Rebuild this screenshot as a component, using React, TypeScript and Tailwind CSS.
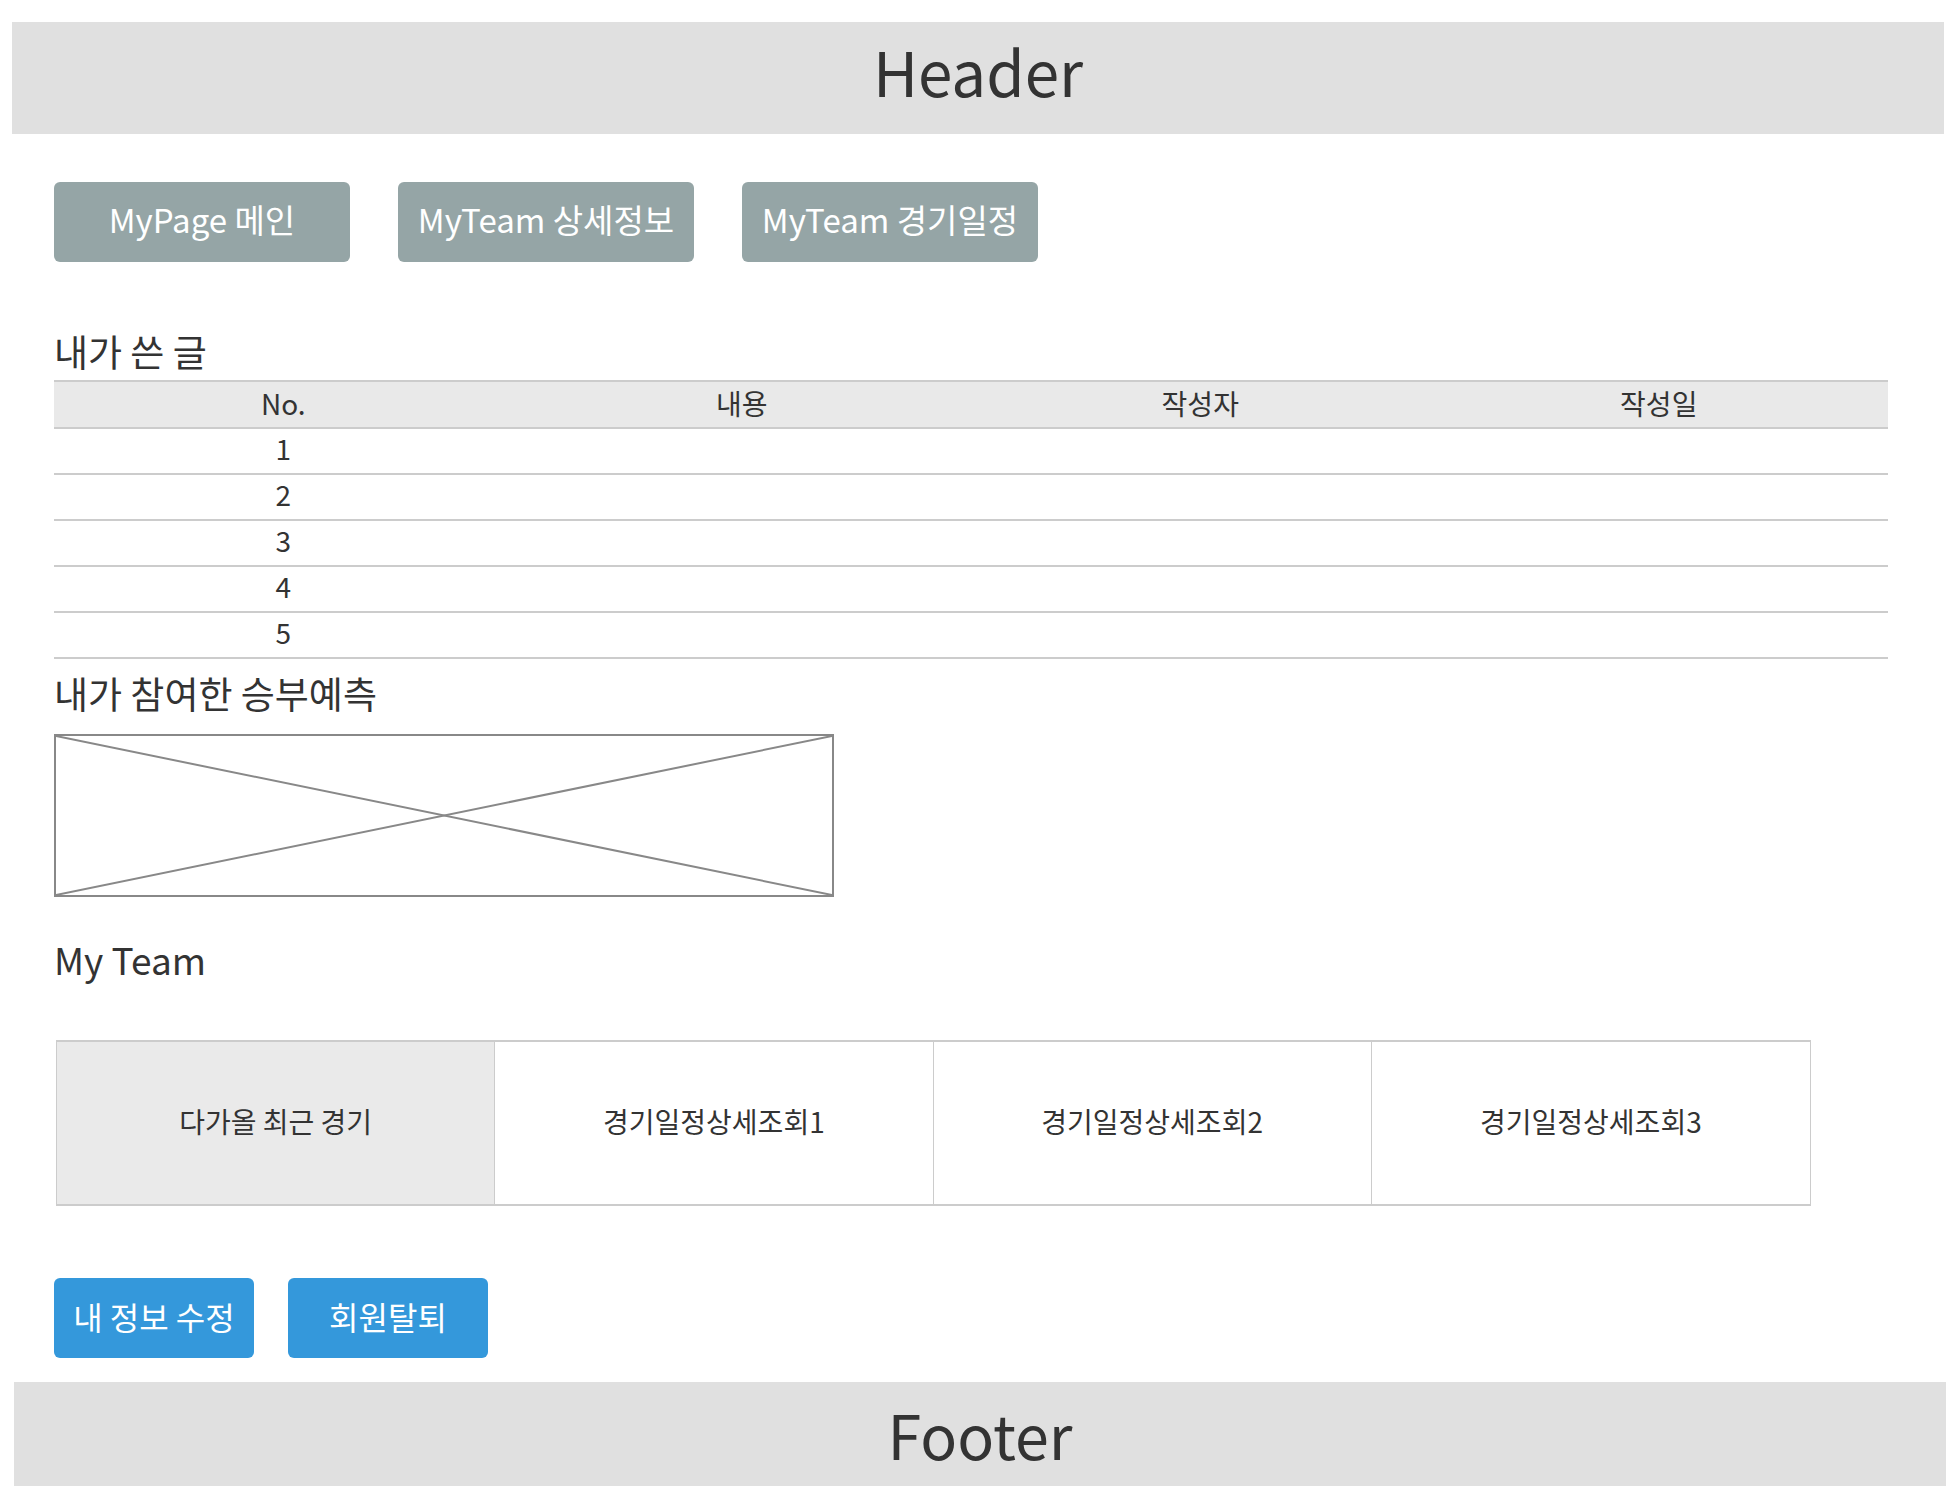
import React from "react";

const font = "font-['Noto_Sans_CJK_KR','Noto_Sans',sans-serif]";

function NavButton({ label }: { label: string }) {
  return (
    <button className="flex items-center justify-center w-[296px] h-[80px] pb-[5px] rounded-[6px] bg-[#95a5a6] text-white text-[33px] leading-[33px]">
      {label}
    </button>
  );
}

function BlueButton({ label }: { label: string }) {
  return (
    <button className="flex items-center justify-center w-[200px] h-[80px] pb-[5px] rounded-[6px] bg-[#3498db] text-white text-[32px] leading-[32px]">
      {label}
    </button>
  );
}

export default function App() {
  const rows = [1, 2, 3, 4, 5];
  const cols = ["No.", "내용", "작성자", "작성일"];
  const team = ["다가올 최근 경기", "경기일정상세조회1", "경기일정상세조회2", "경기일정상세조회3"];
  return (
    <div className={`${font} text-[#333] bg-white pt-[22px] px-[12px] min-h-[1486px]`}>
      <header className="h-[112px] pt-[17px] bg-[#e0e0e0] text-center text-[62px] leading-[62px] text-[#333]">
        Header
      </header>

      <main className="pl-[42px] pr-[56px]">
        <nav className="mt-[48px] flex gap-[48px]">
          <NavButton label="MyPage 메인" />
          <NavButton label="MyTeam 상세정보" />
          <NavButton label="MyTeam 경기일정" />
        </nav>

        <h2 className="mt-[67px] text-[37px] leading-[44px] font-normal">내가 쓴 글</h2>
        <div className="mt-[7px]">
          <div className="grid grid-cols-4 h-[49px] pb-[4px] border-t-2 border-b-2 border-[#ccc] bg-[#e9e9e9] text-[28px] leading-[28px] items-center">
            {cols.map((c) => (
              <div key={c} className="text-center">{c}</div>
            ))}
          </div>
          {rows.map((r) => (
            <div key={r} className="grid grid-cols-4 h-[46px] pb-[6px] border-b-2 border-[#ccc] text-[28px] leading-[28px] items-center">
              <div className="text-center">{r}</div>
              <div />
              <div />
              <div />
            </div>
          ))}
        </div>

        <h2 className="mt-[12px] text-[37px] leading-[44px] font-normal">내가 참여한 승부예측</h2>
        <div className="mt-[19px] w-[780px] h-[163px] border-2 border-[#888]">
          <svg className="w-full h-full block" viewBox="0 0 100 100" preserveAspectRatio="none">
            <line x1="0" y1="0" x2="100" y2="100" stroke="#888" strokeWidth="2" vectorEffect="non-scaling-stroke" />
            <line x1="100" y1="0" x2="0" y2="100" stroke="#888" strokeWidth="2" vectorEffect="non-scaling-stroke" />
          </svg>
        </div>

        <h2 className="mt-[40px] text-[37px] leading-[44px] font-normal">My Team</h2>

        <div className="mt-[59px] ml-[2px] w-[1755px] h-[166px] grid grid-cols-4 border-t-2 border-b-2 border-l border-r border-[#ccc]">
          {team.map((t, i) => (
            <div
              key={t}
              className={`flex items-center justify-center pb-[4px] text-[28px] leading-[28px] ${i === 0 ? "bg-[#eaeaea]" : "bg-white"} ${i < 3 ? "border-r border-[#ccc]" : ""}`}
            >
              {t}
            </div>
          ))}
        </div>

        <div className="mt-[72px] flex gap-[34px]">
          <BlueButton label="내 정보 수정" />
          <BlueButton label="회원탈퇴" />
        </div>
      </main>

      <footer className="mt-[24px] ml-[2px] -mr-[2px] h-[120px] pt-[21px] bg-[#e0e0e0] text-center text-[61px] leading-[61px] text-[#333]">
        Footer
      </footer>
    </div>
  );
}
